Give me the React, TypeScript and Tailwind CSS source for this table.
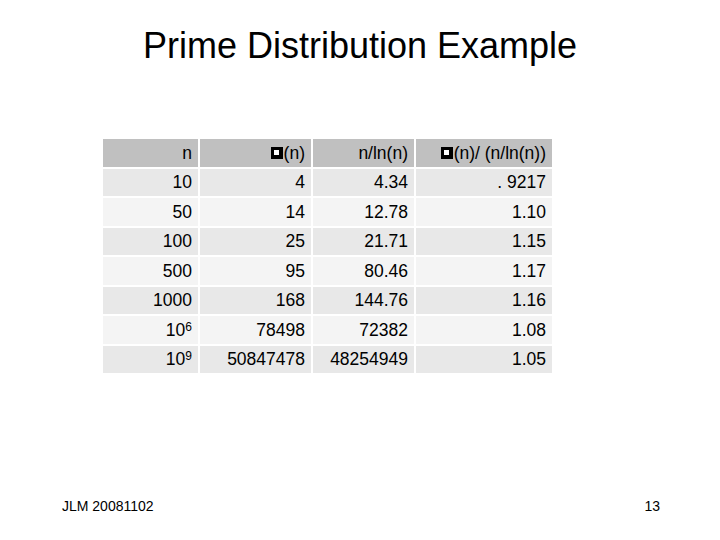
const rows: { n: React.ReactNode; pi: string; est: string; ratio: string }[] = [
  { n: '10', pi: '4', est: '4.34', ratio: '. 9217' },
  { n: '50', pi: '14', est: '12.78', ratio: '1.10' },
  { n: '100', pi: '25', est: '21.71', ratio: '1.15' },
  { n: '500', pi: '95', est: '80.46', ratio: '1.17' },
  { n: '1000', pi: '168', est: '144.76', ratio: '1.16' },
  { n: <>10<sup className="text-[12px] relative -top-[3px]">6</sup></>, pi: '78498', est: '72382', ratio: '1.08' },
  { n: <>10<sup className="text-[12px] relative -top-[3px]">9</sup></>, pi: '50847478', est: '48254949', ratio: '1.05' },
]

// missing-glyph box the slide shows instead of the pi symbol
function Box() {
  return (
    <span className="inline-flex items-center justify-center w-[12px] h-[12px] bg-black mr-[1px] align-[-1px]">
      <span className="w-[5px] h-[5px] bg-white" />
    </span>
  )
}

export default function App() {
  const cell = 'flex items-center justify-end pr-[6px] h-[27.5px]'
  return (
    <div className="w-[720px] h-[540px] bg-white flex flex-col text-black" style={{ fontFamily: '"Liberation Sans", Arial, sans-serif' }}>
      <h1 className="text-[36px] leading-none text-center pt-[28px]">Prime Distribution Example</h1>

      <div className="ml-[103px] mt-[75px] grid grid-cols-[95px_111px_101px_136px] gap-[2px] text-[17.5px] bg-white w-fit">
        <div className={`${cell} bg-[#c0c0c0] h-[26px]`}>n</div>
        <div className={`${cell} bg-[#c0c0c0] h-[26px]`}><Box />(n)</div>
        <div className={`${cell} bg-[#c0c0c0] h-[26px]`}>n/ln(n)</div>
        <div className={`${cell} bg-[#c0c0c0] h-[26px]`}><Box />(n)/ (n/ln(n))</div>
        {rows.map((r, i) => {
          const bg = i % 2 === 0 ? 'bg-[#e8e8e8]' : 'bg-[#f4f4f4]'
          return [
            <div key={`a${i}`} className={`${cell} ${bg}`}>{r.n}</div>,
            <div key={`b${i}`} className={`${cell} ${bg}`}>{r.pi}</div>,
            <div key={`c${i}`} className={`${cell} ${bg}`}>{r.est}</div>,
            <div key={`d${i}`} className={`${cell} ${bg}`}>{r.ratio}</div>,
          ]
        })}
      </div>

      <div className="mt-auto mb-[27px] flex justify-between items-end px-[62px] text-[14px] leading-none">
        <span>JLM 20081102</span>
        <span className="mr-[-2px]">13</span>
      </div>
    </div>
  )
}
